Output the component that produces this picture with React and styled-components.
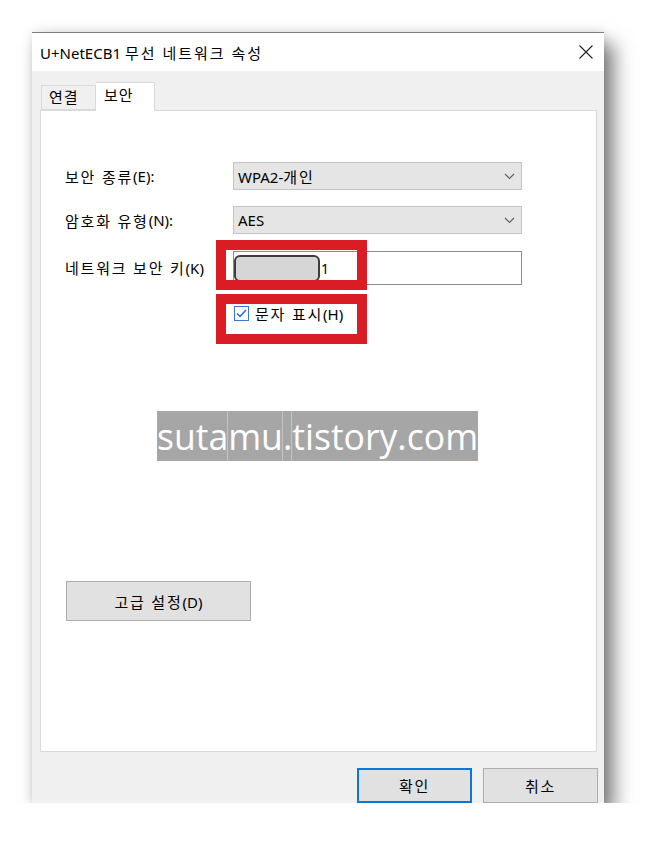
import React from "react";
import styled, { createGlobalStyle } from "styled-components";

const GlobalStyle = createGlobalStyle`
  html, body {
    margin: 0;
    background: #ffffff;
  }
  body {
    font-family: "Noto Sans", "Noto Sans CJK KR", sans-serif;
    color: #000000;
  }
`;

const Page = styled.div`
  padding: 32px 0 0 32px;
`;

// Malgun Gothic sets Hangul wider than Noto CJK, so Korean runs get extra tracking
const Ko = styled.span`
  letter-spacing: ${(p) => p.$ls ?? 1.8}px;
`;

const Window = styled.div`
  width: 572px;
  height: 771px;
  box-sizing: border-box;
  background: #f0f0f0;
  border-top: 1px solid #7f7f7f;
  display: flex;
  flex-direction: column;
  overflow: hidden;
  box-shadow: 10px 12px 18px rgba(0, 0, 0, 0.5), 0 0 10px rgba(0, 0, 0, 0.12);
`;

const TitleBar = styled.div`
  height: 38px;
  flex: none;
  background: #ffffff;
  display: flex;
  align-items: center;
  justify-content: space-between;
  padding: 0 11px 0 8px;
  font-size: 15px;
`;

const Body = styled.div`
  flex: 1;
  padding: 11px 7px 0 8px;
  display: flex;
  flex-direction: column;
`;

const TabStrip = styled.div`
  height: 28px;
  display: flex;
  align-items: flex-end;
  padding-left: 1px;
`;

const Tab = styled.div`
  box-sizing: border-box;
  height: ${(p) => (p.$active ? "29px" : "25px")};
  width: ${(p) => p.$w}px;
  margin-bottom: ${(p) => (p.$active ? "-1px" : "0")};
  padding: ${(p) => (p.$active ? "0 0 6px 8px" : "0 0 2px 7px")};
  background: ${(p) => (p.$active ? "#ffffff" : "#f0f0f0")};
  border: 1px solid #d9d9d9;
  border-bottom: ${(p) => (p.$active ? "none" : "1px solid #d9d9d9")};
  border-left: ${(p) => (p.$active ? "none" : "1px solid #d9d9d9")};
  position: relative;
  z-index: ${(p) => (p.$active ? 2 : 1)};
  font-size: 15px;
  display: flex;
  align-items: center;
`;

const Panel = styled.div`
  position: relative;
  height: 642px;
  box-sizing: border-box;
  background: #ffffff;
  border: 1px solid #d9d9d9;
  padding: 51px 26px 0 24px;
  display: flex;
  flex-direction: column;
`;

const Form = styled.div`
  display: grid;
  grid-template-columns: 168px 289px;
  grid-template-rows: 28px 28px 35px 23px;
  row-gap: 16px;
  font-size: 15px;
`;

const Label = styled.div`
  display: flex;
  align-items: center;
  white-space: nowrap;
`;

const Combo = styled.div`
  box-sizing: border-box;
  background: #e5e5e5;
  border: 1px solid #c4c4c4;
  display: flex;
  align-items: center;
  justify-content: space-between;
  padding: 0 6px 0 4px;
`;

const KeyInput = styled.div`
  box-sizing: border-box;
  margin-top: 1px;
  background: #ffffff;
  border: 1px solid #8c8c8c;
  display: flex;
  align-items: center;
`;

const Redaction = styled.span`
  box-sizing: border-box;
  width: 86px;
  height: 27px;
  border: 2px solid #3d3d3d;
  border-radius: 6px;
  background: #d6d6d6;
`;

const KeyTail = styled.span`
  font-size: 14px;
  margin-left: 1px;
`;

const CheckRow = styled.div`
  grid-column: 2;
  margin-top: 1px;
  display: flex;
  align-items: center;
  gap: 6px;
  padding-left: 1px;
`;

const CheckBox = styled.span`
  box-sizing: border-box;
  width: 15px;
  height: 15px;
  border: 1px solid #3a78d4;
  background: #ffffff;
  display: flex;
  align-items: center;
  justify-content: center;
`;

const Watermark = styled.div`
  align-self: center;
  margin-top: 87px;
  height: 50px;
  background: #a6a6a6;
  color: #ffffff;
  font-family: "Open Sans", "Noto Sans", sans-serif;
  font-size: 35.6px;
  line-height: 50px;
  display: flex;
`;

const Seg = styled.span`
  border-left: ${(p) => (p.$line ? "1px solid #c4c4c4" : "none")};
  margin-left: ${(p) => (p.$line ? "-1px" : "0")};
`;

const Button = styled.button`
  box-sizing: border-box;
  width: ${(p) => p.$w}px;
  height: ${(p) => p.$h}px;
  background: #e1e1e1;
  border: ${(p) => (p.$primary ? "2px solid #0a78d7" : "1px solid #adadad")};
  font-family: inherit;
  font-size: 15px;
  color: #000000;
  padding: 0;
`;

const AdvancedButton = styled(Button)`
  align-self: flex-start;
  margin-top: 120px;
  margin-left: 1px;
`;

const Footer = styled.div`
  padding-top: 16px;
  margin-right: -1px;
  display: flex;
  justify-content: flex-end;
  gap: 11px;
`;

const Mark = styled.div`
  position: absolute;
  left: 175px;
  top: ${(p) => p.$top}px;
  width: 151px;
  height: 50px;
  box-sizing: border-box;
  border: 10px solid #da1c25;
  pointer-events: none;
`;

const Chevron = () => (
  <svg width="11" height="7" viewBox="0 0 11 7">
    <path d="M1 1 L5.5 5.5 L10 1" fill="none" stroke="#5f5f5f" strokeWidth="1.1" />
  </svg>
);

const CloseIcon = () => (
  <svg width="14" height="14" viewBox="0 0 14 14">
    <path d="M0.5 0.5 L13.5 13.5 M13.5 0.5 L0.5 13.5" stroke="#222" strokeWidth="1.1" />
  </svg>
);

const Check = () => (
  <svg width="11" height="9" viewBox="0 0 11 9">
    <path d="M1 4.5 L4 7.5 L10 1" fill="none" stroke="#1f6bd3" strokeWidth="1.5" />
  </svg>
);

const App = () => {
  return (
    <Page>
      <GlobalStyle />
      <Window>
        <TitleBar>
          <span>
            U+NetECB1 <Ko $ls={2}>무선 네트워크 속성</Ko>
          </span>
          <CloseIcon />
        </TitleBar>
        <Body>
          <TabStrip>
            <Tab $w={55}><Ko $ls={1}>연결</Ko></Tab>
            <Tab $w={59} $active><Ko $ls={1}>보안</Ko></Tab>
          </TabStrip>
          <Panel>
            <Form>
              <Label><Ko>보안 종류</Ko>(E):</Label>
              <Combo>
                <span>WPA2-<Ko>개인</Ko></span>
                <Chevron />
              </Combo>
              <Label><Ko>암호화 유형</Ko>(N):</Label>
              <Combo>
                <span>AES</span>
                <Chevron />
              </Combo>
              <Label><Ko>네트워크 보안 키</Ko>(K)</Label>
              <KeyInput>
                <Redaction />
                <KeyTail>1</KeyTail>
              </KeyInput>
              <CheckRow>
                <CheckBox>
                  <Check />
                </CheckBox>
                <span><Ko>문자 표시</Ko>(H)</span>
              </CheckRow>
            </Form>
            <Watermark>
              <Seg>suta</Seg>
              <Seg $line>mu</Seg>
              <Seg $line>.</Seg>
              <Seg $line>tistory.com</Seg>
            </Watermark>
            <AdvancedButton $w={185} $h={40}><Ko>고급 설정</Ko>(D)</AdvancedButton>
            <Mark $top={129} />
            <Mark $top={183} />
          </Panel>
          <Footer>
            <Button $w={115} $h={35} $primary><Ko>확인</Ko></Button>
            <Button $w={115} $h={35}><Ko>취소</Ko></Button>
          </Footer>
        </Body>
      </Window>
    </Page>
  );
};

export default App;
